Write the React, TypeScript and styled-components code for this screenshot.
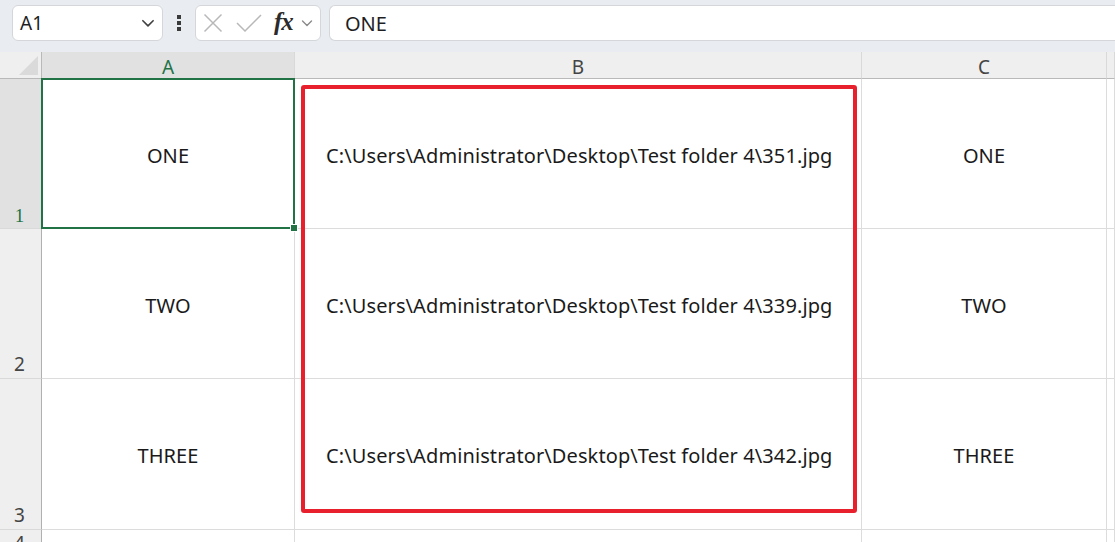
import React from 'react';
import styled, { createGlobalStyle } from 'styled-components';

const GlobalStyle = createGlobalStyle`
  html, body {
    margin: 0;
    padding: 0;
    background: #ffffff;
    overflow: hidden;
  }
  body {
    font-family: "Noto Sans", "Liberation Sans", sans-serif;
  }
`;

const Page = styled.div`
  width: 1115px;
  height: 542px;
  display: flex;
  flex-direction: column;
  overflow: hidden;
`;

const Toolbar = styled.div`
  height: 52px;
  flex: none;
  box-sizing: border-box;
  background: #e9edf2;
  display: flex;
  align-items: flex-start;
  padding: 5px 0 0 12px;
`;

const Box = styled.div<{ width?: number }>`
  height: 36px;
  box-sizing: border-box;
  width: ${(p) => (p.width ? `${p.width}px` : 'auto')};
  flex: ${(p) => (p.width ? 'none' : '1')};
  background: #ffffff;
  border: 1px solid #d4d6d9;
  border-radius: 6px;
  display: flex;
  align-items: center;
`;

const NameBox = styled(Box)`
  padding: 0 6px 0 7px;
  justify-content: space-between;
  font-size: 19px;
  color: #1f1f1f;
`;

const Dots = styled.div`
  width: 32px;
  flex: none;
  height: 36px;
  display: flex;
  align-items: center;
  justify-content: center;
`;

const FxBox = styled(Box)`
  margin-right: 8px;
  padding: 0 4px 0 6px;
`;

const FxText = styled.span`
  font-family: "Liberation Serif", "DejaVu Serif", serif;
  font-style: italic;
  font-size: 25px;
  font-weight: 600;
  color: #2b2b2b;
  letter-spacing: -1px;
  margin-right: 7px;
  line-height: 1;
  padding-bottom: 3px;
`;

const FormulaBox = styled(Box)`
  border-right: none;
  border-radius: 6px 0 0 6px;
  padding-left: 15px;
  font-size: 20px;
  color: #1f1f1f;
`;

const Sheet = styled.div`
  position: relative;
  flex: 1;
  display: grid;
  grid-template-columns: 42px 253px 567px 245px 1fr;
  grid-template-rows: 27px 150px 150px 151px 1fr;
  font-size: 20px;
  letter-spacing: 0.1px;
`;

const Corner = styled.div`
  background: #efefef;
  border-right: 1px solid #b9b9b9;
  border-bottom: 1px solid #b9b9b9;
  box-sizing: border-box;
  position: relative;
  overflow: hidden;
`;

const CornerTriangle = styled.div`
  position: absolute;
  right: 3px;
  bottom: 3px;
  width: 0;
  height: 0;
  border-left: 19px solid transparent;
  border-bottom: 19px solid #dadada;
`;

const ColHeader = styled.div<{ active?: boolean }>`
  background: ${(p) => (p.active ? '#e1e1e1' : '#efefef')};
  color: ${(p) => (p.active ? '#217346' : '#444444')};
  border-right: 1px solid #d9d9d9;
  border-bottom: 1px solid ${(p) => (p.active ? '#217346' : '#b9b9b9')};
  box-sizing: border-box;
  display: flex;
  align-items: center;
  justify-content: center;
  font-size: 19px;
  padding-top: 3px;
`;

const RowHeader = styled.div<{ active?: boolean }>`
  background: ${(p) => (p.active ? '#e1e1e1' : '#efefef')};
  color: ${(p) => (p.active ? '#217346' : '#444444')};
  border-right: 1px solid ${(p) => (p.active ? '#217346' : '#b0b0b0')};
  border-bottom: 1px solid #d9d9d9;
  box-sizing: border-box;
  display: flex;
  align-items: flex-end;
  justify-content: center;
  font-size: 19px;
  padding-bottom: 1px;
  padding-right: 2px;
`;

const RowNum = styled.span<{ active?: boolean }>`
  font-family: ${(p) => (p.active ? '"Liberation Serif", serif' : '"Noto Sans", sans-serif')};
`;

const Cell = styled.div`
  border-right: 1px solid #dcdcdc;
  border-bottom: 1px solid #dcdcdc;
  box-sizing: border-box;
  display: flex;
  align-items: center;
  justify-content: center;
  color: #1a1a1a;
  white-space: nowrap;
  padding-top: 3px;
`;

const PathCell = styled(Cell)`
  justify-content: flex-start;
  padding-left: 31px;
`;

const Selection = styled.div`
  position: absolute;
  left: 41px;
  top: 26px;
  width: 254px;
  height: 151px;
  box-sizing: border-box;
  border: 2px solid #217346;
  pointer-events: none;
`;

const Handle = styled.div`
  position: absolute;
  right: -5px;
  bottom: -5px;
  width: 6px;
  height: 6px;
  background: #217346;
  border: 1px solid #ffffff;
`;

const Highlight = styled.div`
  position: absolute;
  left: 301px;
  top: 33px;
  width: 556px;
  height: 428px;
  box-sizing: border-box;
  border: 4px solid #e8202d;
  border-radius: 3px;
  pointer-events: none;
`;

const Chevron = ({ size = 14, color = '#404040' }: { size?: number; color?: string }) => (
  <svg width={size} height={size} viewBox="0 0 14 14" fill="none">
    <path d="M2.5 5 L7 9.5 L11.5 5" stroke={color} strokeWidth="1.4" strokeLinecap="round" strokeLinejoin="round" />
  </svg>
);

const rows = [
  { label: 'ONE', path: 'C:\\Users\\Administrator\\Desktop\\Test folder 4\\351.jpg' },
  { label: 'TWO', path: 'C:\\Users\\Administrator\\Desktop\\Test folder 4\\339.jpg' },
  { label: 'THREE', path: 'C:\\Users\\Administrator\\Desktop\\Test folder 4\\342.jpg' },
];

const App: React.FC = () => {
  return (
    <Page>
      <GlobalStyle />
      <Toolbar>
        <NameBox width={151}>
          <span>A1</span>
          <Chevron size={16} />
        </NameBox>
        <Dots>
          <svg width="4" height="16" viewBox="0 0 4 16">
            <rect x="0" y="0" width="4" height="4" fill="#3a3a3a" />
            <rect x="0" y="6" width="4" height="4" fill="#3a3a3a" />
            <rect x="0" y="12" width="4" height="4" fill="#3a3a3a" />
          </svg>
        </Dots>
        <FxBox width={126}>
          <svg width="22" height="22" viewBox="0 0 22 22" style={{ marginRight: 11 }}>
            <path d="M2.5 2.5 L19.5 19.5 M19.5 2.5 L2.5 19.5" stroke="#b8b8b8" strokeWidth="1.5" />
          </svg>
          <svg width="28" height="22" viewBox="0 0 28 22" style={{ marginRight: 11 }}>
            <path d="M2 11 L10 19 L26 3" stroke="#b8b8b8" strokeWidth="1.5" fill="none" />
          </svg>
          <FxText>fx</FxText>
          <Chevron size={14} color="#8a8a8a" />
        </FxBox>
        <FormulaBox>ONE</FormulaBox>
      </Toolbar>
      <Sheet>
        <Corner>
          <CornerTriangle />
        </Corner>
        <ColHeader active>A</ColHeader>
        <ColHeader>B</ColHeader>
        <ColHeader>C</ColHeader>
        <ColHeader />
        {rows.map((r, i) => (
          <React.Fragment key={r.label}>
            <RowHeader active={i === 0}>
              <RowNum active={i === 0}>{i + 1}</RowNum>
            </RowHeader>
            <Cell>{r.label}</Cell>
            <PathCell>{r.path}</PathCell>
            <Cell>{r.label}</Cell>
            <Cell />
          </React.Fragment>
        ))}
        <RowHeader>
          <RowNum>4</RowNum>
        </RowHeader>
        <Cell />
        <Cell />
        <Cell />
        <Cell />
        <Selection>
          <Handle />
        </Selection>
        <Highlight />
      </Sheet>
    </Page>
  );
};

export default App;
